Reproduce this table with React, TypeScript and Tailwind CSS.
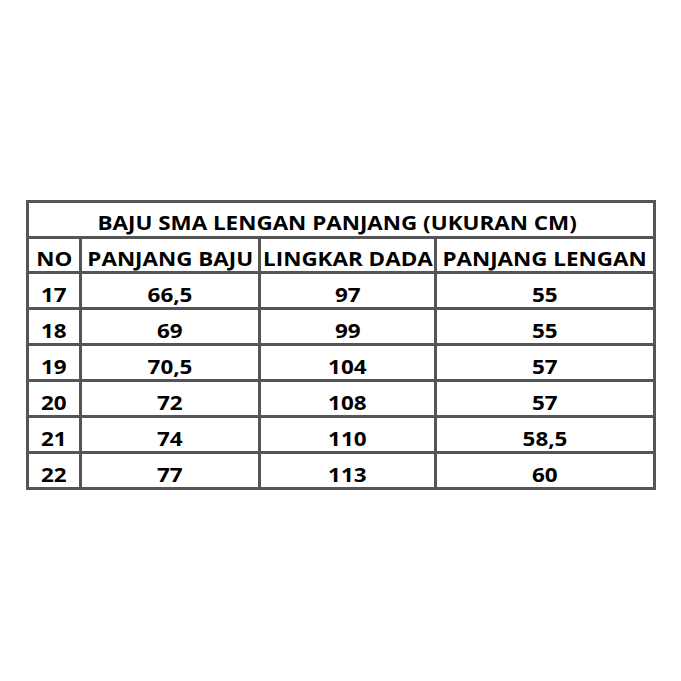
const ROWS: [string, string, string, string][] = [
  ["17", "66,5", "97", "55"],
  ["18", "69", "99", "55"],
  ["19", "70,5", "104", "57"],
  ["20", "72", "108", "57"],
  ["21", "74", "110", "58,5"],
  ["22", "77", "113", "60"],
];

const HEAD = ["NO", "PANJANG BAJU", "LINGKAR DADA", "PANJANG LENGAN"];

// text in the source is a stretched spreadsheet export, so widen glyphs a bit
function Txt({ children }: { children: React.ReactNode }) {
  return <span className="inline-block scale-x-[1.18]">{children}</span>;
}

function Cell({ children }: { children: React.ReactNode }) {
  return (
    <div className="bg-white flex items-end justify-center pb-[2px] leading-none whitespace-nowrap">
      <Txt>{children}</Txt>
    </div>
  );
}

export default function App() {
  return (
    <div
      className="w-[681px] h-[681px] bg-white pt-[200px] pl-[26px] text-black font-bold text-[19px]"
      style={{ fontFamily: '"Open Sans", "Liberation Sans", sans-serif' }}
    >
      <div className="w-[630px] grid grid-cols-[50px_176px_173px_216px] grid-rows-[33px_32px_repeat(6,33px)] gap-[3px] p-[3px] bg-[#555555]">
        <div className="col-span-4 bg-white flex items-end justify-center pb-[3px] pr-[8px] leading-none whitespace-nowrap">
          <Txt>BAJU SMA LENGAN PANJANG (UKURAN CM)</Txt>
        </div>
        {HEAD.map((h) => (
          <Cell key={h}>{h}</Cell>
        ))}
        {ROWS.map((r) =>
          r.map((v, i) => <Cell key={r[0] + "-" + i}>{v}</Cell>)
        )}
      </div>
    </div>
  );
}
